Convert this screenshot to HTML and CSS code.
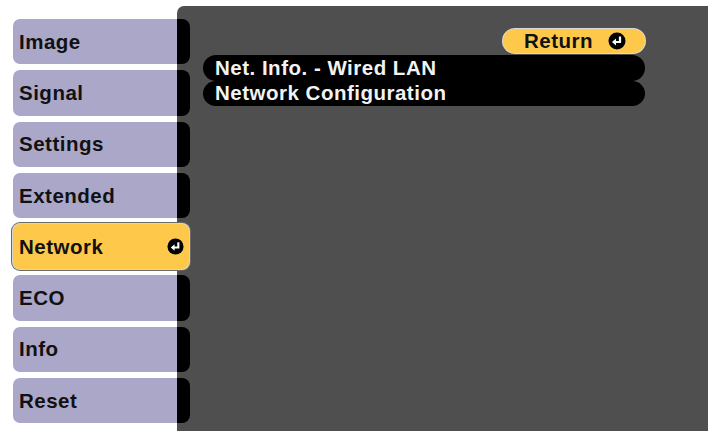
FILE: index.html
```html
<!DOCTYPE html>
<html lang="en">

<head>
    <meta charset="UTF-8">
    <meta name="viewport" content="width=device-width, initial-scale=1.0">
    <title>Projector Menu - Network</title>
    <link rel="stylesheet" href="styles.css">
</head>

<body>
    <div class="screen">
        <div class="menu">
            <div class="menu-item">Image</div>
            <div class="menu-item">Signal</div>
            <div class="menu-item">Settings</div>
            <div class="menu-item">Extended</div>
            <div class="menu-item active">
                <span>Network</span>
                <svg class="enter-icon" viewBox="0 0 18 18" width="17" height="17">
                    <circle cx="9" cy="9" r="8.5" fill="#000" />
                    <path d="M12 4.5 V10 H7" fill="none" stroke="#fff" stroke-width="2.2" />
                    <path d="M4 10 L8 6.6 V13.4 Z" fill="#fff" />
                </svg>
            </div>
            <div class="menu-item">ECO</div>
            <div class="menu-item">Info</div>
            <div class="menu-item">Reset</div>
        </div>

        <div class="panel">
            <div class="tabs">
                <div class="tab"></div>
                <div class="tab"></div>
                <div class="tab"></div>
                <div class="tab"></div>
                <div class="tab"></div>
                <div class="tab"></div>
                <div class="tab"></div>
                <div class="tab"></div>
            </div>

            <div class="content">
                <div class="return-row">
                    <div class="return-btn">
                        <span>Return</span>
                        <svg class="enter-icon" viewBox="0 0 18 18" width="18" height="18">
                            <circle cx="9" cy="9" r="8.5" fill="#000" />
                            <path d="M12 4.5 V10 H7" fill="none" stroke="#fff" stroke-width="2.2" />
                            <path d="M4 10 L8 6.6 V13.4 Z" fill="#fff" />
                        </svg>
                    </div>
                </div>
                <div class="option">Net. Info. - Wired LAN</div>
                <div class="option">Network Configuration</div>
            </div>
        </div>
    </div>
</body>

</html>
```

FILE: styles.css
```css
body {
    margin: 0;
    background-color: #fff;
    font-family: "Liberation Sans", Arial, sans-serif;
    font-weight: bold;
    font-size: 20.5px;
    letter-spacing: 0.5px;
}

.screen {
    display: flex;
    width: 708px;
    height: 431px;
    overflow: hidden;
}

/* left menu */
.menu {
    display: flex;
    flex-direction: column;
    gap: 6px;
    width: 164px;
    padding: 19px 0 0 13px;
    position: relative;
    z-index: 1;
}

.menu-item {
    display: flex;
    align-items: center;
    justify-content: space-between;
    height: 45.3px;
    box-sizing: border-box;
    padding: 0 6px;
    background-color: #aaa7c9;
    color: #111;
    border-radius: 7px 0 0 7px;
}

.menu-item.active {
    background-color: #fec94b;
    margin-right: -12px;
    border-radius: 7px;
    box-shadow: 0 0 0 1px #d9d6cf, 0 0 0 2px #6a6a6a;
    padding-right: 5px;
}

.enter-icon {
    display: block;
    flex-shrink: 0;
}

/* right panel */
.panel {
    flex: 1;
    display: flex;
    margin-top: 6px;
    background-color: #4f4f4f;
    border-top-left-radius: 7px;
}

.tabs {
    display: flex;
    flex-direction: column;
    gap: 6px;
    width: 13px;
    padding-top: 13px;
}

.tab {
    height: 45.3px;
    background-color: #000;
    border-radius: 0 8px 8px 0;
    box-shadow: -9px 0 0 -5px #000;
}

.content {
    display: flex;
    flex-direction: column;
    width: 442px;
    padding: 23px 0 0 13px;
}

.return-row {
    display: flex;
    justify-content: flex-end;
    margin-bottom: 2px;
}

.return-btn {
    display: flex;
    align-items: center;
    gap: 15px;
    height: 24px;
    box-sizing: border-box;
    padding: 0 19px 0 21px;
    background-color: #fec94b;
    color: #111;
    border-radius: 12px;
    box-shadow: 0 0 0 1px #dcdad4;
}

.option {
    display: flex;
    align-items: center;
    height: 25.5px;
    padding-left: 12px;
    background-color: #000;
    color: #f2f2f2;
    border-radius: 13px;
}
```
